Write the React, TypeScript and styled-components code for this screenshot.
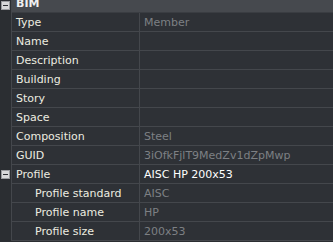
import React from "react";
import styled, { createGlobalStyle } from "styled-components";

const Global = createGlobalStyle`
  html, body { margin: 0; padding: 0; background: #2b2e32; overflow: hidden; }
  body { font-family: "DejaVu Sans", Tahoma, sans-serif; font-size: 11px; }
`;

const Grid = styled.div`
  display: grid;
  grid-template-columns: 12px 128px 1fr;
  margin-top: -6px;
  width: 333px;
`;

const Gutter = styled.div<{ $header?: boolean }>`
  background: #2b2e32;
  border-right: 1px solid #44474c;
  display: flex;
  align-items: ${(p) => (p.$header ? "flex-end" : "center")};
  padding-bottom: ${(p) => (p.$header ? 3 : 0)}px;
  justify-content: center;
  height: 19px;
  box-sizing: border-box;
`;

const Header = styled.div`
  grid-column: 2 / 4;
  background: #46494e;
  color: #f0f0f0;
  font-weight: bold;
  height: 19px;
  line-height: 20px;
  padding-left: 4px;
  box-sizing: border-box;
  border-bottom: 1px solid #3a3d42;
  overflow: hidden;
`;

const Label = styled.div<{ $indent?: boolean }>`
  background: #2e3136;
  color: #ecece0;
  height: 19px;
  line-height: 20px;
  padding-left: ${(p) => (p.$indent ? 23 : 4)}px;
  border-bottom: 1px solid #44474c;
  border-right: 1px solid #44474c;
  box-sizing: border-box;
  white-space: nowrap;
  overflow: hidden;
`;

const Value = styled.div<{ $bright?: boolean }>`
  background: #2e3136;
  color: ${(p) => (p.$bright ? "#ffffff" : "#7d8084")};
  height: 19px;
  line-height: 20px;
  padding-left: 4px;
  border-bottom: 1px solid #44474c;
  box-sizing: border-box;
  white-space: nowrap;
  overflow: hidden;
`;

const Toggle = styled.div`
  width: 9px;
  height: 9px;
  box-sizing: border-box;
  background: #d8d9da;
  border: 1px solid #9a9c9f;
  position: relative;
  &::after {
    content: "";
    position: absolute;
    left: 1px;
    right: 1px;
    top: 3px;
    height: 1px;
    background: #2b2e32;
  }
`;

type Row = { label: string; value?: string; indent?: boolean; bright?: boolean; toggle?: boolean };

const rows: Row[] = [
  { label: "Type", value: "Member" },
  { label: "Name" },
  { label: "Description" },
  { label: "Building" },
  { label: "Story" },
  { label: "Space" },
  { label: "Composition", value: "Steel" },
  { label: "GUID", value: "3iOfkFjlT9MedZv1dZpMwp" },
  { label: "Profile", value: "AISC HP 200x53", bright: true, toggle: true },
  { label: "Profile standard", value: "AISC", indent: true },
  { label: "Profile name", value: "HP", indent: true },
  { label: "Profile size", value: "200x53", indent: true },
];

export default function App() {
  return (
    <>
      <Global />
      <Grid>
        <Gutter $header>
          <Toggle />
        </Gutter>
        <Header>BIM</Header>
        {rows.map((r) => (
          <React.Fragment key={r.label}>
            <Gutter>{r.toggle && <Toggle />}</Gutter>
            <Label $indent={r.indent}>{r.label}</Label>
            <Value $bright={r.bright}>{r.value ?? ""}</Value>
          </React.Fragment>
        ))}
      </Grid>
    </>
  );
}
